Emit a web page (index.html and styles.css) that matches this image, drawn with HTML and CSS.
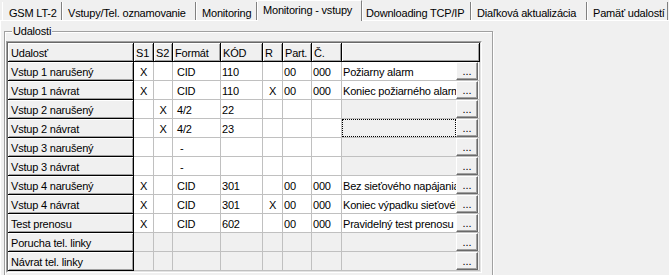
FILE: index.html
```html
<!DOCTYPE html>
<html lang="sk">
<head>
<meta charset="utf-8">
<title>Monitoring - vstupy</title>
<link rel="stylesheet" href="styles.css">
</head>
<body>
<div class="tabs">
  <div class="tab t1">GSM LT-2</div>
  <div class="tab t2">Vstupy/Tel. oznamovanie</div>
  <div class="tab t3">Monitoring</div>
  <div class="tab sel">Monitoring - vstupy</div>
  <div class="tab t5">Downloading TCP/IP</div>
  <div class="tab t6">Diaľková aktualizácia</div>
  <div class="tab t7">Pamäť udalostí</div>
</div>
<div class="page">
  <fieldset class="group">
    <legend>Udalosti</legend>
    <div class="gw">
      <div class="grid">
        <div class="h first">Udalosť</div><div class="h">S1</div><div class="h">S2</div><div class="h">Formát</div><div class="h">KÓD</div><div class="h">R</div><div class="h">Part.</div><div class="h">Č.</div><div class="h"></div>

        <div class="h first">Vstup 1 narušený</div><div class="c x">X</div><div class="c"></div><div class="c fm">CID</div><div class="c">110</div><div class="c"></div><div class="c">00</div><div class="c">000</div><div class="d"><span class="dt">Požiarny alarm</span><span class="btn">...</span></div>

        <div class="h first">Vstup 1 návrat</div><div class="c x">X</div><div class="c"></div><div class="c fm">CID</div><div class="c">110</div><div class="c x">X</div><div class="c">00</div><div class="c">000</div><div class="d"><span class="dt">Koniec požiarného alarmu</span><span class="btn">...</span></div>

        <div class="h first">Vstup 2 narušený</div><div class="c"></div><div class="c x">X</div><div class="c fm">4/2</div><div class="c">22</div><div class="c"></div><div class="c"></div><div class="c"></div><div class="d g"><span class="dt"></span><span class="btn">...</span></div>

        <div class="h first">Vstup 2 návrat</div><div class="c"></div><div class="c x">X</div><div class="c fm">4/2</div><div class="c">23</div><div class="c"></div><div class="c"></div><div class="c"></div><div class="d g"><span class="dt focus"></span><span class="btn">...</span></div>

        <div class="h first">Vstup 3 narušený</div><div class="c"></div><div class="c"></div><div class="c fm dash">-</div><div class="c"></div><div class="c"></div><div class="c"></div><div class="c"></div><div class="d g"><span class="dt"></span><span class="btn">...</span></div>

        <div class="h first">Vstup 3 návrat</div><div class="c"></div><div class="c"></div><div class="c fm dash">-</div><div class="c"></div><div class="c"></div><div class="c"></div><div class="c"></div><div class="d g"><span class="dt"></span><span class="btn">...</span></div>

        <div class="h first">Vstup 4 narušený</div><div class="c x">X</div><div class="c"></div><div class="c fm">CID</div><div class="c">301</div><div class="c"></div><div class="c">00</div><div class="c">000</div><div class="d"><span class="dt">Bez sieťového napájania</span><span class="btn">...</span></div>

        <div class="h first">Vstup 4 návrat</div><div class="c x">X</div><div class="c"></div><div class="c fm">CID</div><div class="c">301</div><div class="c x">X</div><div class="c">00</div><div class="c">000</div><div class="d"><span class="dt">Koniec výpadku sieťového napájania</span><span class="btn">...</span></div>

        <div class="h first">Test prenosu</div><div class="c x">X</div><div class="c"></div><div class="c fm">CID</div><div class="c">602</div><div class="c"></div><div class="c">00</div><div class="c">000</div><div class="d"><span class="dt">Pravidelný test prenosu</span><span class="btn">...</span></div>

        <div class="h first">Porucha tel. linky</div><div class="c g"></div><div class="c g"></div><div class="c g"></div><div class="c g"></div><div class="c g"></div><div class="c g"></div><div class="c g"></div><div class="d g"><span class="dt"></span><span class="btn">...</span></div>

        <div class="h first">Návrat tel. linky</div><div class="c g"></div><div class="c g"></div><div class="c g"></div><div class="c g"></div><div class="c g"></div><div class="c g"></div><div class="c g"></div><div class="d g"><span class="dt"></span><span class="btn">...</span></div>
      </div>
    </div>
  </fieldset>
</div>
</body>
</html>
```

FILE: styles.css
```css
html, body {
  margin: 0;
  padding: 0;
  overflow: hidden;
  background: #f0f0f0;
}
body {
  width: 669px;
  height: 275px;
  font-family: "Liberation Sans", Arial, sans-serif;
  font-size: 11px;
  letter-spacing: -0.2px;
  color: #000;
}

/* ---------- tabs ---------- */
.tabs {
  display: flex;
  align-items: flex-end;
  height: 20px;
  padding-left: 2px;
}
.tab {
  box-sizing: border-box;
  height: 18px;
  border-left: 1px solid #fff;
  border-right: 1px solid #808080;
  padding: 4px 0 0 5px;
  line-height: 14px;
  white-space: nowrap;
  overflow: hidden;
  background: #f0f0f0;
}
.t1 { width: 60px; padding-left: 6px; }
.t2 { width: 134px; }
.t3 { width: 61px; }
.t5 { width: 109px; padding-left: 3px; }
.t6 { width: 116px; }
.t7 { width: 81px; }
.sel {
  position: relative;
  z-index: 1;
  width: 105px;
  height: 21px;
  margin-bottom: -1px;
  border-top: 1px solid #fff;
  padding-top: 2px;
}

/* ---------- page ---------- */
.page {
  border-top: 1px solid #fff;
  border-left: 1px solid #fff;
  height: 254px;
}

.group {
  box-sizing: border-box;
  width: 489px;
  min-width: 0;
  margin: 4px 0 0 3px;
  padding: 3px 0 4px 1px;
  border: 1px solid #a0a0a0;
  box-shadow: inset 1px 1px 0 #fff, 1px 1px 0 #fff;
}
.group legend {
  margin-left: 6px;
  padding: 0 1px;
  line-height: 13px;
  background: #f0f0f0;
}

/* ---------- string grid ---------- */
.gw {
  box-sizing: border-box;
  width: 476px;
  border: 1px solid;
  border-color: #a0a0a0 #fff #fff #a0a0a0;
}
.grid {
  display: grid;
  grid-template-columns: 126px 20px 19px 48px 42px 20px 29px 30px 138px;
  grid-auto-rows: 19px;
  border: 1px solid;
  border-color: #696969 #e3e3e3 #e3e3e3 #696969;
  background: #fff;
}
.c, .h, .d {
  box-sizing: border-box;
  white-space: nowrap;
  overflow: hidden;
  line-height: 16px;
}
.c {
  padding: 2px 0 0 1px;
  border-right: 1px solid #c0c0c0;
  border-bottom: 1px solid #c0c0c0;
  background: #fff;
}
.h {
  padding: 2px 0 0 2px;
  border-right: 1px solid #000;
  border-bottom: 1px solid #000;
  background: #f0f0f0;
  box-shadow: inset 1px 1px 0 #fff, inset -1px -1px 0 #a0a0a0;
}
.h.first { padding-left: 3px; }
.x { text-align: center; padding-left: 0; }
.fm { padding-left: 4px; }
.dash { padding-left: 7px; }
.g { background: #f0f0f0; }

.d {
  display: flex;
  border-right: 1px solid #c0c0c0;
  border-bottom: 1px solid #c0c0c0;
  background: #fff;
}
.d.g { background: #f0f0f0; }
.dt {
  flex: 1;
  min-width: 0;
  box-sizing: border-box;
  padding: 2px 0 0 1px;
  overflow: hidden;
  white-space: nowrap;
}
.dt.focus {
  border: 1px dotted #000;
}
.btn {
  box-sizing: border-box;
  flex: none;
  width: 22px;
  height: 18px;
  margin-right: 1px;
  padding-top: 1px;
  line-height: 14px;
  text-align: center;
  letter-spacing: 0;
  background: #f0f0f0;
  border-top: 1px solid #fff;
  border-left: 1px solid #fff;
  border-right: 1px solid #696969;
  border-bottom: 1px solid #696969;
  box-shadow: inset -1px -1px 0 #a0a0a0;
}
```
